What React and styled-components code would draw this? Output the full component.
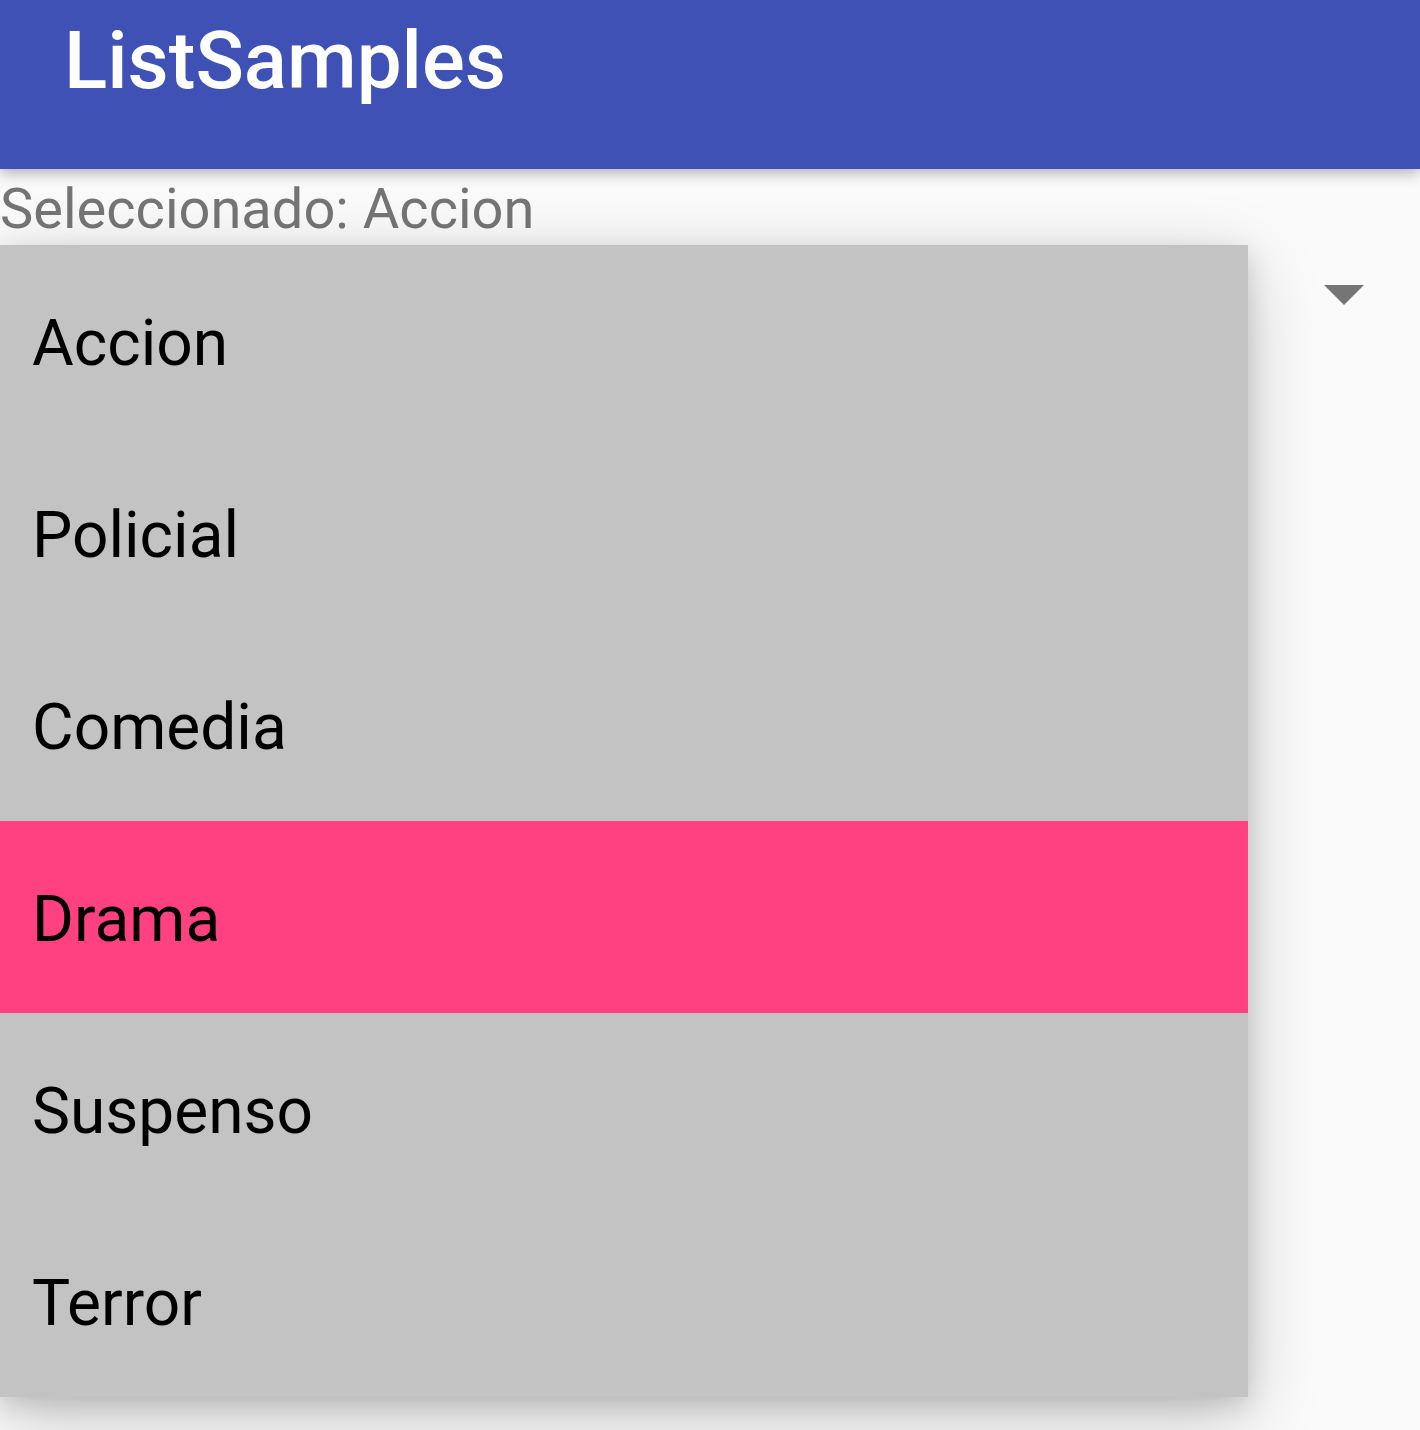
import styled, { createGlobalStyle } from 'styled-components';

const GlobalStyle = createGlobalStyle`
  html, body {
    margin: 0;
    padding: 0;
    background: #fafafa;
    font-family: Roboto, "Noto Sans", sans-serif;
  }
`;

const genres = ['Accion', 'Policial', 'Comedia', 'Drama', 'Suspenso', 'Terror'];

const Page = styled.div`
  width: 1420px;
  height: 1430px;
  overflow: hidden;
  background: #fafafa;
`;

const AppBar = styled.header`
  position: relative;
  z-index: 2;
  height: 169px;
  background: #3f51b5;
  box-shadow: 0 4px 14px rgba(0, 0, 0, 0.3);
  box-sizing: border-box;
  padding: 21px 0 0 64px;
`;

const Title = styled.h1`
  margin: 0;
  color: #fff;
  font-size: 80px;
  font-weight: 500;
  line-height: 1;
`;

const Content = styled.main`
  position: relative;
`;

const Selected = styled.div`
  height: 76px;
  line-height: 76px;
  padding-top: 2px;
  box-sizing: border-box;
  font-size: 56px;
  color: #757575;
`;

const Spinner = styled.div`
  position: relative;
  height: 110px;
  display: flex;
  justify-content: flex-end;
  padding: 40px 56px 0 0;
  box-sizing: border-box;
`;

const Arrow = styled.svg`
  width: 40px;
  height: 20px;
`;

const Popup = styled.ul`
  position: absolute;
  top: 0;
  left: 0;
  width: 1248px;
  margin: 0;
  padding: 0;
  list-style: none;
  background: #c3c3c3;
  box-shadow: 0 20px 70px rgba(0, 0, 0, 0.2), 0 8px 24px rgba(0, 0, 0, 0.14);
  z-index: 3;
`;

const Item = styled.li`
  height: 192px;
  box-sizing: border-box;
  padding: 6px 32px 0;
  line-height: 186px;
  font-size: 64px;
  color: #000;
  background: ${({ $active }) => ($active ? '#ff4081' : 'transparent')};
`;

export default function App() {
  return (
    <Page>
      <GlobalStyle />
      <AppBar>
        <Title>ListSamples</Title>
      </AppBar>
      <Content>
        <Selected>Seleccionado: Accion</Selected>
        <Spinner>
          <Arrow viewBox="0 0 40 20">
            <path d="M0 0 H40 L20 20 Z" fill="#757575" />
          </Arrow>
          <Popup>
            {genres.map((g) => (
              <Item key={g} $active={g === 'Drama'}>
                {g}
              </Item>
            ))}
          </Popup>
        </Spinner>
      </Content>
    </Page>
  );
}
